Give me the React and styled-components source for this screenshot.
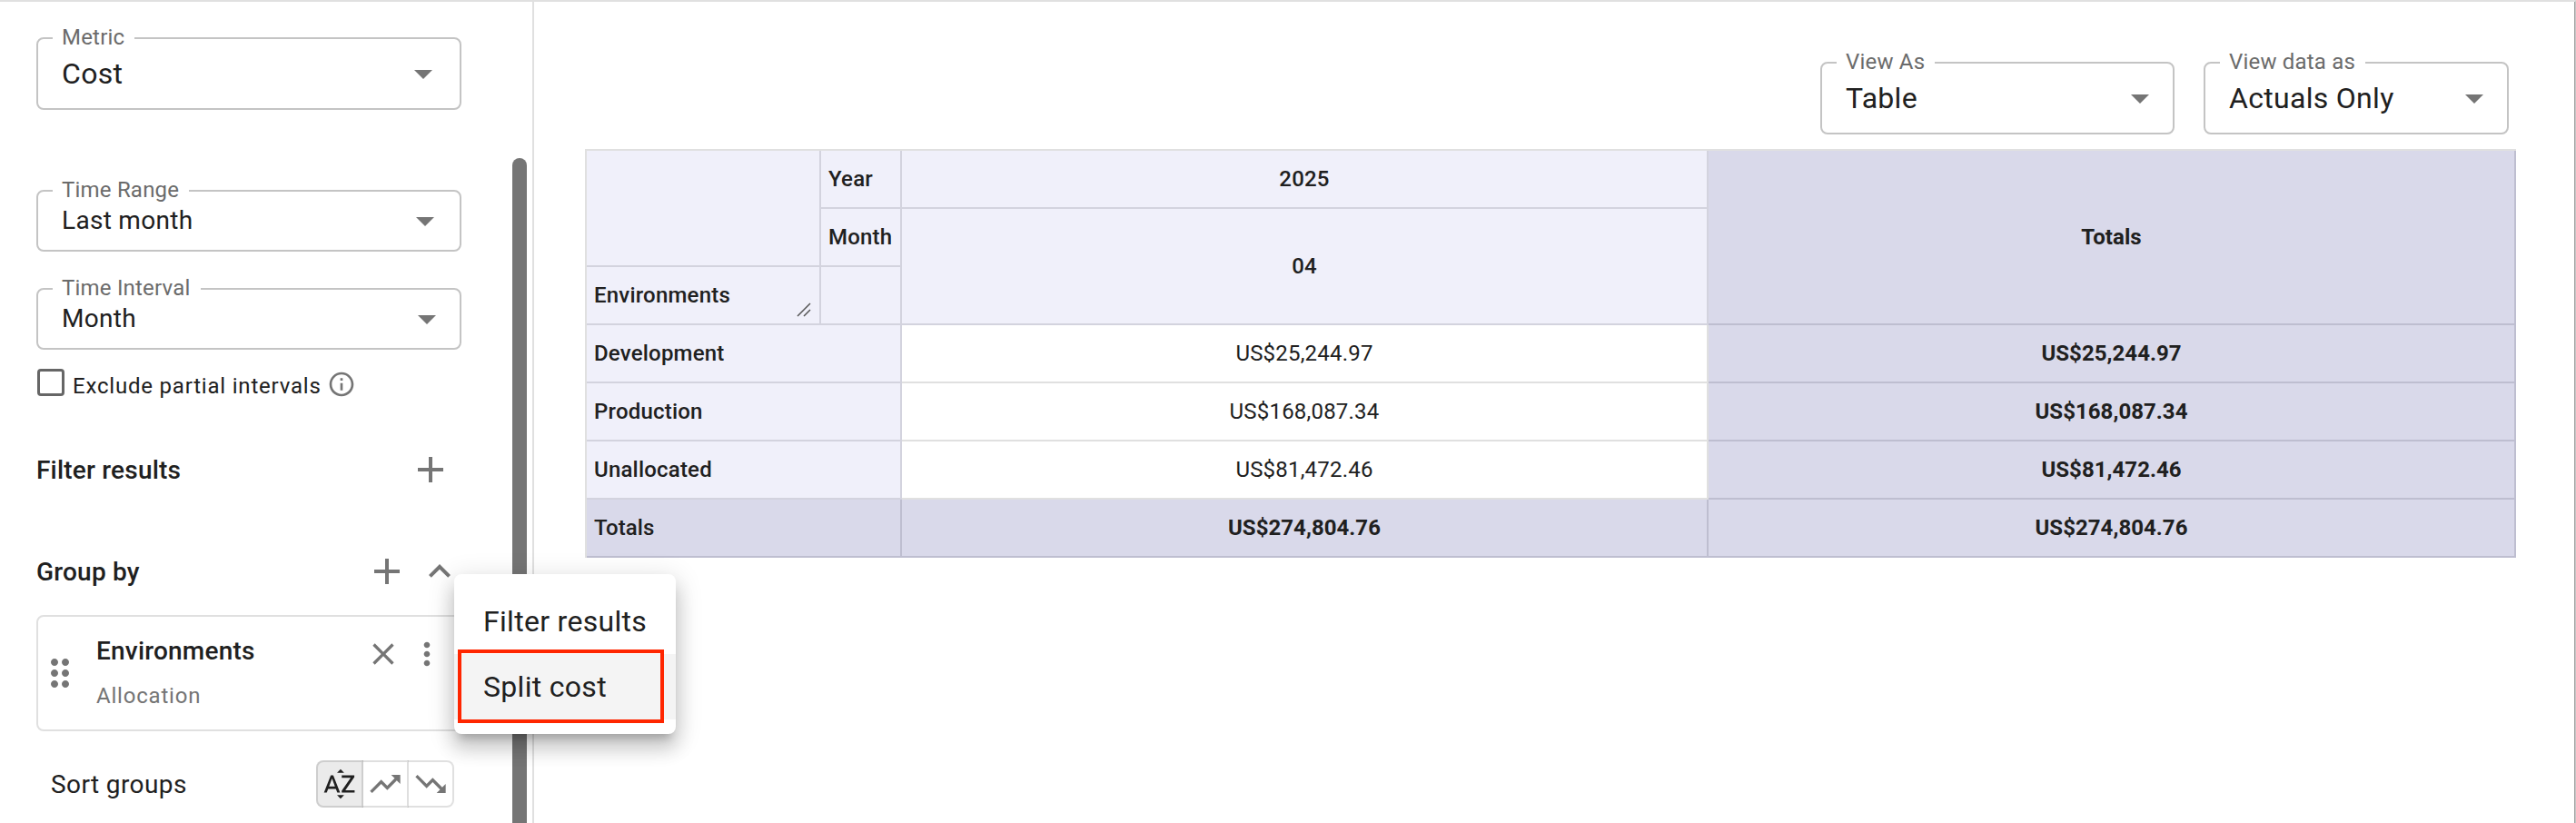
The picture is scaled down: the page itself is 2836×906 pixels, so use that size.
import React from "react";
import styled, { createGlobalStyle } from "styled-components";

const GlobalStyle = createGlobalStyle`
  * {
    box-sizing: border-box;
  }
  body {
    margin: 0;
    background-color: #fff;
    font-family: Roboto, "Liberation Sans", sans-serif;
    color: #202020;
    overflow: hidden;
  }
`;

const Page = styled.div`
  display: flex;
  width: 2836px;
  height: 906px;
  border-top: 2px solid #e0e0e0;
  border-right: 1px solid #c6c6c6;
  overflow: hidden;
`;

const Sidebar = styled.aside`
  display: flex;
  width: 588px;
  flex-shrink: 0;
  border-right: 2px solid #e0e0e0;
  padding-left: 40px;
`;

const SidebarContent = styled.div`
  display: flex;
  flex-direction: column;
  width: 468px;
  flex-shrink: 0;
  padding-top: 26px;
`;

const ScrollThumb = styled.div`
  width: 16px;
  height: 900px;
  margin-top: 172px;
  margin-left: 56px;
  flex-shrink: 0;
  border-radius: 8px;
  background-color: #757575;
`;

const Field = styled.fieldset`
  display: flex;
  align-items: flex-start;
  justify-content: space-between;
  width: ${(props) => props.$width}px;
  height: ${(props) => props.$height}px;
  flex-shrink: 0;
  min-width: 0;
  margin: 0 0 ${(props) => props.$gap || 0}px;
  padding: 0 0 0 26px;
  border: 2px solid #c4c4c4;
  border-radius: 8px;
`;

const Legend = styled.legend`
  width: ${(props) => props.$width}px;
  height: 28px;
  margin-left: -10px;
  padding-left: 10px;
  font-size: 24px;
  line-height: 26px;
  letter-spacing: 0.2px;
  white-space: nowrap;
  color: #6b6b6b;
`;

const FieldValue = styled.div`
  font-size: ${(props) => (props.$dense ? 28 : 32)}px;
  line-height: ${(props) => (props.$dense ? 37 : 50)}px;
  letter-spacing: 0.3px;
`;

const Arrow = styled.span`
  width: 20px;
  height: 10px;
  margin-top: ${(props) => props.$top}px;
  margin-right: ${(props) => props.$right}px;
  background-color: #757575;
  clip-path: polygon(0 0, 100% 0, 50% 100%);
`;

const CheckRow = styled.div`
  display: flex;
  align-items: center;
  height: 40px;
  margin-bottom: 48px;
`;

const Checkbox = styled.span`
  width: 30px;
  height: 30px;
  margin-left: 1px;
  margin-top: -8px;
  border: 3px solid #666;
  border-radius: 4px;
`;

const CheckLabel = styled.span`
  width: 279px;
  margin-left: 9px;
  font-size: 24px;
  letter-spacing: 0.8px;
  white-space: nowrap;
`;

const InfoSlot = styled.span`
  display: flex;
  margin-left: 1px;
  padding-bottom: 4px;
`;

const SectionRow = styled.div`
  display: flex;
  align-items: center;
  height: 48px;
  margin-bottom: ${(props) => props.$gap}px;
  padding-right: ${(props) => props.$right}px;
`;

const SectionTitle = styled.h3`
  flex: 1;
  margin: 0;
  font-size: 28px;
  font-weight: 500;
  letter-spacing: 0.2px;
`;

const Icon = styled.svg`
  width: ${(props) => props.$size}px;
  height: ${(props) => props.$size}px;
  margin-left: ${(props) => props.$left || 0}px;
  flex-shrink: 0;
  fill: ${(props) => props.$color || "#757575"};
`;

const GroupCard = styled.div`
  display: flex;
  height: 128px;
  flex-shrink: 0;
  margin-bottom: 32px;
  padding-top: 21px;
  border: 2px solid #e0e0e0;
  border-radius: 8px;
`;

const DragHandle = styled.div`
  display: flex;
  padding-top: 17px;
`;

const GroupText = styled.div`
  width: 296px;
  margin-left: 16px;
`;

const GroupName = styled.div`
  font-size: 28px;
  font-weight: 500;
  line-height: 34px;
  letter-spacing: 0.2px;
`;

const GroupType = styled.div`
  margin-top: 18px;
  font-size: 24px;
  line-height: 28px;
  letter-spacing: 0.8px;
  color: #757575;
`;

const SortRow = styled.div`
  display: flex;
  align-items: center;
  height: 52px;
  padding-left: 16px;
`;

const SortLabel = styled.div`
  width: 292px;
  font-size: 28px;
  letter-spacing: 0.4px;
`;

const ToggleGroup = styled.div`
  display: flex;
`;

const Toggle = styled.button`
  display: flex;
  align-items: center;
  justify-content: center;
  width: 52px;
  height: 52px;
  padding: 0;
  border: 2px solid rgba(0, 0, 0, 0.12);
  background-color: ${(props) => (props.$active ? "#ebebeb" : "transparent")};
  &:first-child {
    border-radius: 8px 0 0 8px;
  }
  &:not(:first-child) {
    margin-left: -2px;
    border-left-color: transparent;
  }
  &:last-child {
    border-radius: 0 8px 8px 0;
  }
`;

const Menu = styled.div`
  position: absolute;
  left: 500px;
  top: 632px;
  width: 244px;
  height: 176px;
  padding: 16px 0;
  border-radius: 8px;
  background-color: #fff;
  box-shadow: 0 10px 10px -6px rgba(0, 0, 0, 0.2),
    0 16px 20px 2px rgba(0, 0, 0, 0.14), 0 6px 28px 4px rgba(0, 0, 0, 0.12);
`;

const MenuItem = styled.div`
  height: 72px;
  padding-left: 32px;
  font-size: 32px;
  line-height: 72px;
  letter-spacing: 0.3px;
  background-color: ${(props) => (props.$hover ? "#f4f4f4" : "#fff")};
`;

const Highlight = styled.div`
  position: absolute;
  left: 4px;
  top: 83px;
  width: 227px;
  height: 81px;
  border: 4px solid #ff2600;
`;

const Main = styled.main`
  flex: 1;
  padding-left: 56px;
  border-right: 1px solid #a0a0a0;
`;

const Controls = styled.div`
  display: flex;
  justify-content: flex-end;
  gap: 32px;
  height: 162px;
  padding-top: 53px;
  padding-right: 72px;
`;

const Pivot = styled.table`
  width: 2126px;
  table-layout: fixed;
  border-collapse: separate;
  border-spacing: 0;
  border-top: 2px solid #e0e0e0;
  border-left: 2px solid #e0e0e0;
  font-size: 24px;
`;

const Cell = styled.td`
  height: 64px;
  padding: 0;
  border-right: 2px solid #e0e0e0;
  border-bottom: 2px solid #e0e0e0;
  text-align: center;
  letter-spacing: 0.2px;
`;

const HeadCell = styled.th`
  height: 64px;
  padding: 0 0 0 ${(props) => (props.$left ? 8 : 0)}px;
  border-right: 2px solid #d3d3de;
  border-bottom: 2px solid #d3d3de;
  background-color: #f0f0fa;
  font-weight: 500;
  text-align: ${(props) => (props.$left ? "left" : "center")};
  letter-spacing: 0.2px;
`;

const TotalCell = styled(Cell)`
  padding-left: ${(props) => (props.$left ? 8 : 0)}px;
  border-right-color: #bebed0;
  border-bottom-color: #bebed0;
  background-color: #d9d9ea;
  font-weight: ${(props) => (props.$left ? 500 : 700)};
  text-align: ${(props) => (props.$left ? "left" : "center")};
  letter-spacing: 0.05px;
`;

const ResizableLabel = styled.div`
  display: flex;
  align-items: center;
  justify-content: space-between;
  height: 62px;
`;

const Grip = styled.svg`
  width: 16px;
  height: 16px;
  margin-top: 32px;
  margin-right: 9px;
  stroke: #555;
  stroke-width: 1.5;
`;

const ADD = "M19 13h-6v6h-2v-6H5v-2h6V5h2v6h6v2z";
const EXPAND_LESS = "m12 8-6 6 1.41 1.41L12 10.83l4.59 4.58L18 14z";
const INFO =
  "M11 7h2v2h-2zm0 4h2v6h-2zm1-9C6.48 2 2 6.48 2 12s4.48 10 10 10 10-4.48 10-10S17.52 2 12 2zm0 18c-4.41 0-8-3.59-8-8s3.59-8 8-8 8 3.59 8 8-3.59 8-8 8z";
const DRAG =
  "M11 18c0 1.1-.9 2-2 2s-2-.9-2-2 .9-2 2-2 2 .9 2 2zm-2-8c-1.1 0-2 .9-2 2s.9 2 2 2 2-.9 2-2-.9-2-2-2zm0-6c-1.1 0-2 .9-2 2s.9 2 2 2 2-.9 2-2-.9-2-2-2zm6 4c1.1 0 2-.9 2-2s-.9-2-2-2-2 .9-2 2 .9 2 2 2zm0 2c-1.1 0-2 .9-2 2s.9 2 2 2 2-.9 2-2-.9-2-2-2zm0 6c-1.1 0-2 .9-2 2s.9 2 2 2 2-.9 2-2-.9-2-2-2z";
const CLOSE =
  "M19 6.41 17.59 5 12 10.59 6.41 5 5 6.41 10.59 12 5 17.59 6.41 19 12 13.41 17.59 19 19 17.59 13.41 12z";
const MORE =
  "M12 8c1.1 0 2-.9 2-2s-.9-2-2-2-2 .9-2 2 .9 2 2 2zm0 2c-1.1 0-2 .9-2 2s.9 2 2 2 2-.9 2-2-.9-2-2-2zm0 6c-1.1 0-2 .9-2 2s.9 2 2 2 2-.9 2-2-.9-2-2-2z";
const SORT_ALPHA =
  "M14.94 4.66h-4.72l2.36-2.36zm-4.69 14.71h4.66l-2.33 2.33zM6.1 6.27 1.6 17.73h1.84l.92-2.45h5.11l.92 2.45h1.84L7.74 6.27H6.1zm-1.13 7.37 1.94-5.18 1.94 5.18H4.97zm10.76 2.5h6.12v1.59h-8.53v-1.29l5.92-8.56h-5.88v-1.6h8.3v1.26l-5.93 8.6z";
const TREND_UP =
  "m16 6 2.29 2.29-4.88 4.88-4-4L2 16.59 3.41 18l6-6 4 4 6.3-6.29L22 12V6z";
const TREND_DOWN =
  "m16 18 2.29-2.29-4.88-4.88-4 4L2 7.41 3.41 6l6 6 4-4 6.3 6.29L22 12v6z";

const rows = [
  { name: "Development", value: "US$25,244.97" },
  { name: "Production", value: "US$168,087.34" },
  { name: "Unallocated", value: "US$81,472.46" },
];

const MdIcon = ({ path, size, left, color }) => (
  <Icon viewBox="0 0 24 24" $size={size} $left={left} $color={color}>
    <path d={path} />
  </Icon>
);

const Select = ({ label, value, width, notch, gap, dense, arrowRight }) => (
  <Field $width={width} $height={dense ? 81 : 93} $gap={gap}>
    <Legend $width={notch}>{label}</Legend>
    <FieldValue $dense={dense}>{value}</FieldValue>
    <Arrow $top={dense ? 15 : 21} $right={arrowRight} />
  </Field>
);

const App = () => {
  return (
    <>
      <GlobalStyle />
      <Page>
        <Sidebar>
          <SidebarContent>
            <Select
              label="Metric"
              value="Cost"
              width={468}
              notch={90}
              gap={75}
              arrowRight={30}
            />
            <Select
              dense
              label="Time Range"
              value="Last month"
              width={468}
              notch={150}
              gap={27}
              arrowRight={28}
            />
            <Select
              dense
              label="Time Interval"
              value="Month"
              width={468}
              notch={163}
              gap={20}
              arrowRight={26}
            />
            <CheckRow>
              <Checkbox />
              <CheckLabel>Exclude partial intervals</CheckLabel>
              <InfoSlot>
                <MdIcon path={INFO} size={32} />
              </InfoSlot>
            </CheckRow>
            <SectionRow $gap={64} $right={10}>
              <SectionTitle>Filter results</SectionTitle>
              <MdIcon path={ADD} size={48} />
            </SectionRow>
            <SectionRow $gap={24} $right={0}>
              <SectionTitle>Group by</SectionTitle>
              <MdIcon path={ADD} size={48} />
              <MdIcon path={EXPAND_LESS} size={48} left={10} />
            </SectionRow>
            <GroupCard>
              <DragHandle>
                <MdIcon path={DRAG} size={48} />
              </DragHandle>
              <GroupText>
                <GroupName>Environments</GroupName>
                <GroupType>Allocation</GroupType>
              </GroupText>
              <MdIcon path={CLOSE} size={40} />
              <MdIcon path={MORE} size={40} left={8} />
            </GroupCard>
            <SortRow>
              <SortLabel>Sort groups</SortLabel>
              <ToggleGroup>
                <Toggle $active>
                  <MdIcon path={SORT_ALPHA} size={40} color="#202020" />
                </Toggle>
                <Toggle>
                  <MdIcon path={TREND_UP} size={40} />
                </Toggle>
                <Toggle>
                  <MdIcon path={TREND_DOWN} size={40} />
                </Toggle>
              </ToggleGroup>
            </SortRow>
          </SidebarContent>
          <ScrollThumb />
        </Sidebar>
        <Main>
          <Controls>
            <Select
              label="View As"
              value="Table"
              width={390}
              notch={108}
              arrowRight={26}
            />
            <Select
              label="View data as"
              value="Actuals Only"
              width={336}
              notch={160}
              arrowRight={26}
            />
          </Controls>
          <Pivot>
            <colgroup>
              <col width="258" />
              <col width="89" />
              <col width="888" />
              <col width="889" />
            </colgroup>
            <thead>
              <tr>
                <HeadCell rowSpan={2} />
                <HeadCell $left>Year</HeadCell>
                <HeadCell>2025</HeadCell>
                <TotalCell as="th" rowSpan={3}>
                  Totals
                </TotalCell>
              </tr>
              <tr>
                <HeadCell $left>Month</HeadCell>
                <HeadCell rowSpan={2}>04</HeadCell>
              </tr>
              <tr>
                <HeadCell $left>
                  <ResizableLabel>
                    Environments
                    <Grip viewBox="0 0 16 16">
                      <path d="M1 15 15 1M8 15 15 8" />
                    </Grip>
                  </ResizableLabel>
                </HeadCell>
                <HeadCell />
              </tr>
            </thead>
            <tbody>
              {rows.map((row) => (
                <tr key={row.name}>
                  <HeadCell $left colSpan={2}>
                    {row.name}
                  </HeadCell>
                  <Cell>{row.value}</Cell>
                  <TotalCell>{row.value}</TotalCell>
                </tr>
              ))}
              <tr>
                <TotalCell $left colSpan={2}>
                  Totals
                </TotalCell>
                <TotalCell>US$274,804.76</TotalCell>
                <TotalCell>US$274,804.76</TotalCell>
              </tr>
            </tbody>
          </Pivot>
        </Main>
        <Menu>
          <MenuItem>Filter results</MenuItem>
          <MenuItem $hover>Split cost</MenuItem>
          <Highlight />
        </Menu>
      </Page>
    </>
  );
};

export default App;
